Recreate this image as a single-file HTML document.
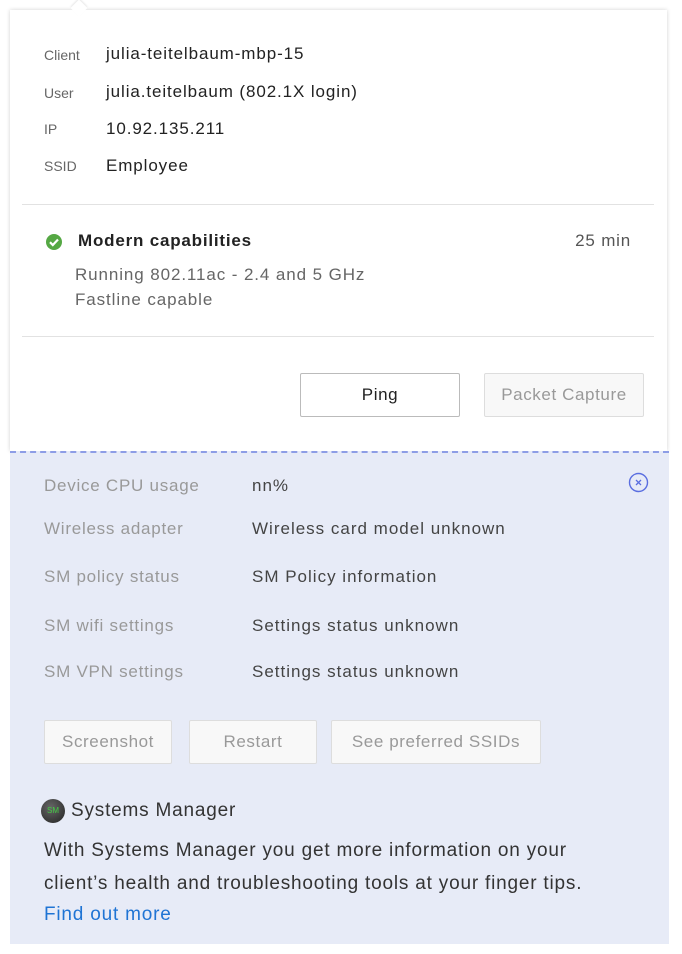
<!DOCTYPE html>
<html><head><style>
body{margin:0;width:682px;height:954px;background:#fff;position:relative;font-family:"Liberation Sans",sans-serif;overflow:hidden}
.a{position:absolute;white-space:nowrap}
.panel{position:absolute;left:10px;top:10px;width:657px;height:441px;background:#fff;box-shadow:0 0 4px rgba(0,0,0,0.18)}
.blue{position:absolute;left:10px;top:451px;width:659px;height:491px;background:#e7ebf7;border-top:2px dashed #8d9de6}
.lbl{color:#666;font-size:14px}
.val{color:#222;font-size:17px;letter-spacing:0.9px}
.gl{color:#999;font-size:17px;letter-spacing:0.75px}
.gv{color:#444;font-size:17px;letter-spacing:1px}
.btn{position:absolute;background:#f8f8f8;border:1px solid #ddd;border-radius:2px;color:#999;font-size:17px;text-align:center;box-sizing:border-box;letter-spacing:0.6px}
.body{font-size:19px;color:#333;letter-spacing:0.8px}
</style></head><body>
<div class="panel"></div>
<div class="a" style="left:73px;top:2px;width:12px;height:12px;background:#fff;transform:rotate(45deg);box-shadow:-1px -1px 2px rgba(0,0,0,0.1)"></div>
<div class="a lbl" style="left:44px;top:47px">Client</div><div class="a val" style="left:106px;top:44px">julia-teitelbaum-mbp-15</div>
<div class="a lbl" style="left:44px;top:85px">User</div><div class="a val" style="left:106px;top:82px">julia.teitelbaum (802.1X login)</div>
<div class="a lbl" style="left:44px;top:121px">IP</div><div class="a val" style="left:106px;top:119px">10.92.135.211</div>
<div class="a lbl" style="left:44px;top:158px">SSID</div><div class="a val" style="left:106px;top:156px">Employee</div>
<div class="a" style="left:22px;top:204px;width:632px;height:1px;background:#e2e2e2"></div>
<svg class="a" style="left:45px;top:233px" width="18" height="18" viewBox="0 0 18 18"><circle cx="9" cy="9" r="8" fill="#55a844"/><path d="M5 9.2l2.8 2.8L13 6.5" stroke="#fff" stroke-width="2.2" fill="none"/></svg>
<div class="a" style="left:78px;top:231px;font-size:17px;font-weight:bold;color:#222;letter-spacing:0.8px">Modern capabilities</div>
<div class="a" style="right:51px;top:231px;font-size:17px;color:#555;letter-spacing:0.8px">25 min</div>
<div class="a" style="left:75px;top:265px;font-size:17px;color:#666;letter-spacing:0.9px">Running 802.11ac - 2.4 and 5 GHz</div>
<div class="a" style="left:75px;top:290px;font-size:17px;color:#666;letter-spacing:0.9px">Fastline capable</div>
<div class="a" style="left:22px;top:336px;width:632px;height:1px;background:#e2e2e2"></div>
<div class="btn" style="left:300px;top:373px;width:160px;height:44px;line-height:42px;background:#fff;border-color:#bbb;color:#222">Ping</div>
<div class="btn" style="left:484px;top:373px;width:160px;height:44px;line-height:42px">Packet Capture</div>
<div class="blue"></div>
<svg class="a" style="left:628px;top:472px" width="21" height="21" viewBox="0 0 21 21"><circle cx="10.5" cy="10.5" r="9" fill="none" stroke="#5a6ee0" stroke-width="1.4"/><path d="M8 8l5 5M13 8l-5 5" stroke="#5a6ee0" stroke-width="1.3"/></svg>
<div class="a gl" style="left:44px;top:476px">Device CPU usage</div><div class="a gv" style="left:252px;top:476px">nn%</div>
<div class="a gl" style="left:44px;top:519px">Wireless adapter</div><div class="a gv" style="left:252px;top:519px">Wireless card model unknown</div>
<div class="a gl" style="left:44px;top:567px">SM policy status</div><div class="a gv" style="left:252px;top:567px">SM Policy information</div>
<div class="a gl" style="left:44px;top:616px">SM wifi settings</div><div class="a gv" style="left:252px;top:616px">Settings status unknown</div>
<div class="a gl" style="left:44px;top:662px">SM VPN settings</div><div class="a gv" style="left:252px;top:662px">Settings status unknown</div>
<div class="btn" style="left:44px;top:720px;width:128px;height:44px;line-height:42px">Screenshot</div>
<div class="btn" style="left:189px;top:720px;width:128px;height:44px;line-height:42px">Restart</div>
<div class="btn" style="left:331px;top:720px;width:210px;height:44px;line-height:42px">See preferred SSIDs</div>
<div class="a" style="left:41px;top:799px;width:24px;height:24px;border-radius:50%;background:radial-gradient(circle at 40% 35%,#666,#222);color:#4c4;font-size:8px;line-height:24px;text-align:center">SM</div>
<div class="a body" style="left:71px;top:800px">Systems Manager</div>
<div class="a body" style="left:44px;top:840px">With Systems Manager you get more information on your</div>
<div class="a body" style="left:44px;top:873px">client’s health and troubleshooting tools at your finger tips.</div>
<div class="a body" style="left:44px;top:904px;color:#1f74d4">Find out more</div>
</body></html>
